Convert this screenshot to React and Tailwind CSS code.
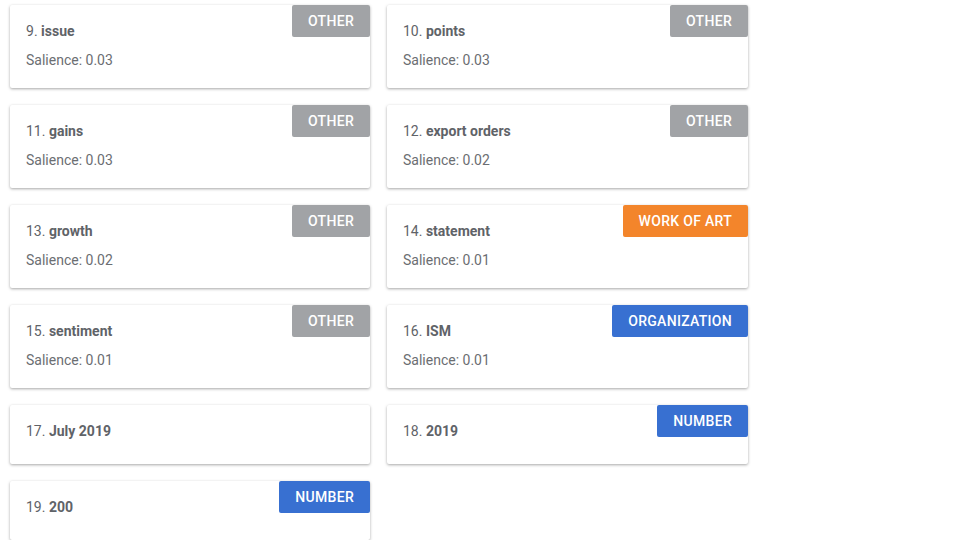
import React from "react";

const entities = [
  { n: 9, name: "issue", salience: "0.03", type: "OTHER" },
  { n: 10, name: "points", salience: "0.03", type: "OTHER" },
  { n: 11, name: "gains", salience: "0.03", type: "OTHER" },
  { n: 12, name: "export orders", salience: "0.02", type: "OTHER" },
  { n: 13, name: "growth", salience: "0.02", type: "OTHER" },
  { n: 14, name: "statement", salience: "0.01", type: "WORK OF ART" },
  { n: 15, name: "sentiment", salience: "0.01", type: "OTHER" },
  { n: 16, name: "ISM", salience: "0.01", type: "ORGANIZATION" },
  { n: 17, name: "July 2019", type: null },
  { n: 18, name: "2019", type: "NUMBER" },
  { n: 19, name: "200", type: "NUMBER" },
];

const badgeColor = {
  OTHER: "bg-[#a1a3a6]",
  "WORK OF ART": "bg-[#f3852b]",
  ORGANIZATION: "bg-[#3870d1]",
  NUMBER: "bg-[#3870d1]",
};

function EntityCard({ entity }) {
  const hasSalience = !!entity.salience;
  return (
    <div
      className={`relative bg-white rounded-[2px] shadow-[0_1px_3px_rgba(0,0,0,0.35)] px-4 pt-4 ${
        hasSalience ? "h-[83px]" : "h-[59px]"
      }`}
    >
      {entity.type && (
        <div
          className={`absolute top-0 right-0 h-8 px-4 pt-px flex items-center text-white text-[14px] font-medium tracking-[0.3px] rounded-[2px] ${badgeColor[entity.type]}`}
        >
          {entity.type}
        </div>
      )}
      <p className="text-[14px] leading-5 text-[#5f6368]">
        {entity.n}. <span className="font-bold">{entity.name}</span>
      </p>
      {hasSalience && (
        <p className="mt-[9px] text-[14px] leading-5 text-[#6b6e72]">
          Salience: {entity.salience}
        </p>
      )}
    </div>
  );
}

export default function App() {
  return (
    <div
      className="w-[960px] h-[540px] overflow-hidden bg-white pt-[5px] pl-[10px]"
      style={{ fontFamily: "Roboto, 'Liberation Sans', sans-serif" }}
    >
      <div className="grid grid-cols-[360px_361px] gap-x-[17px] gap-y-[17px]">
        {entities.map((e) => (
          <EntityCard key={e.n} entity={e} />
        ))}
      </div>
    </div>
  );
}
